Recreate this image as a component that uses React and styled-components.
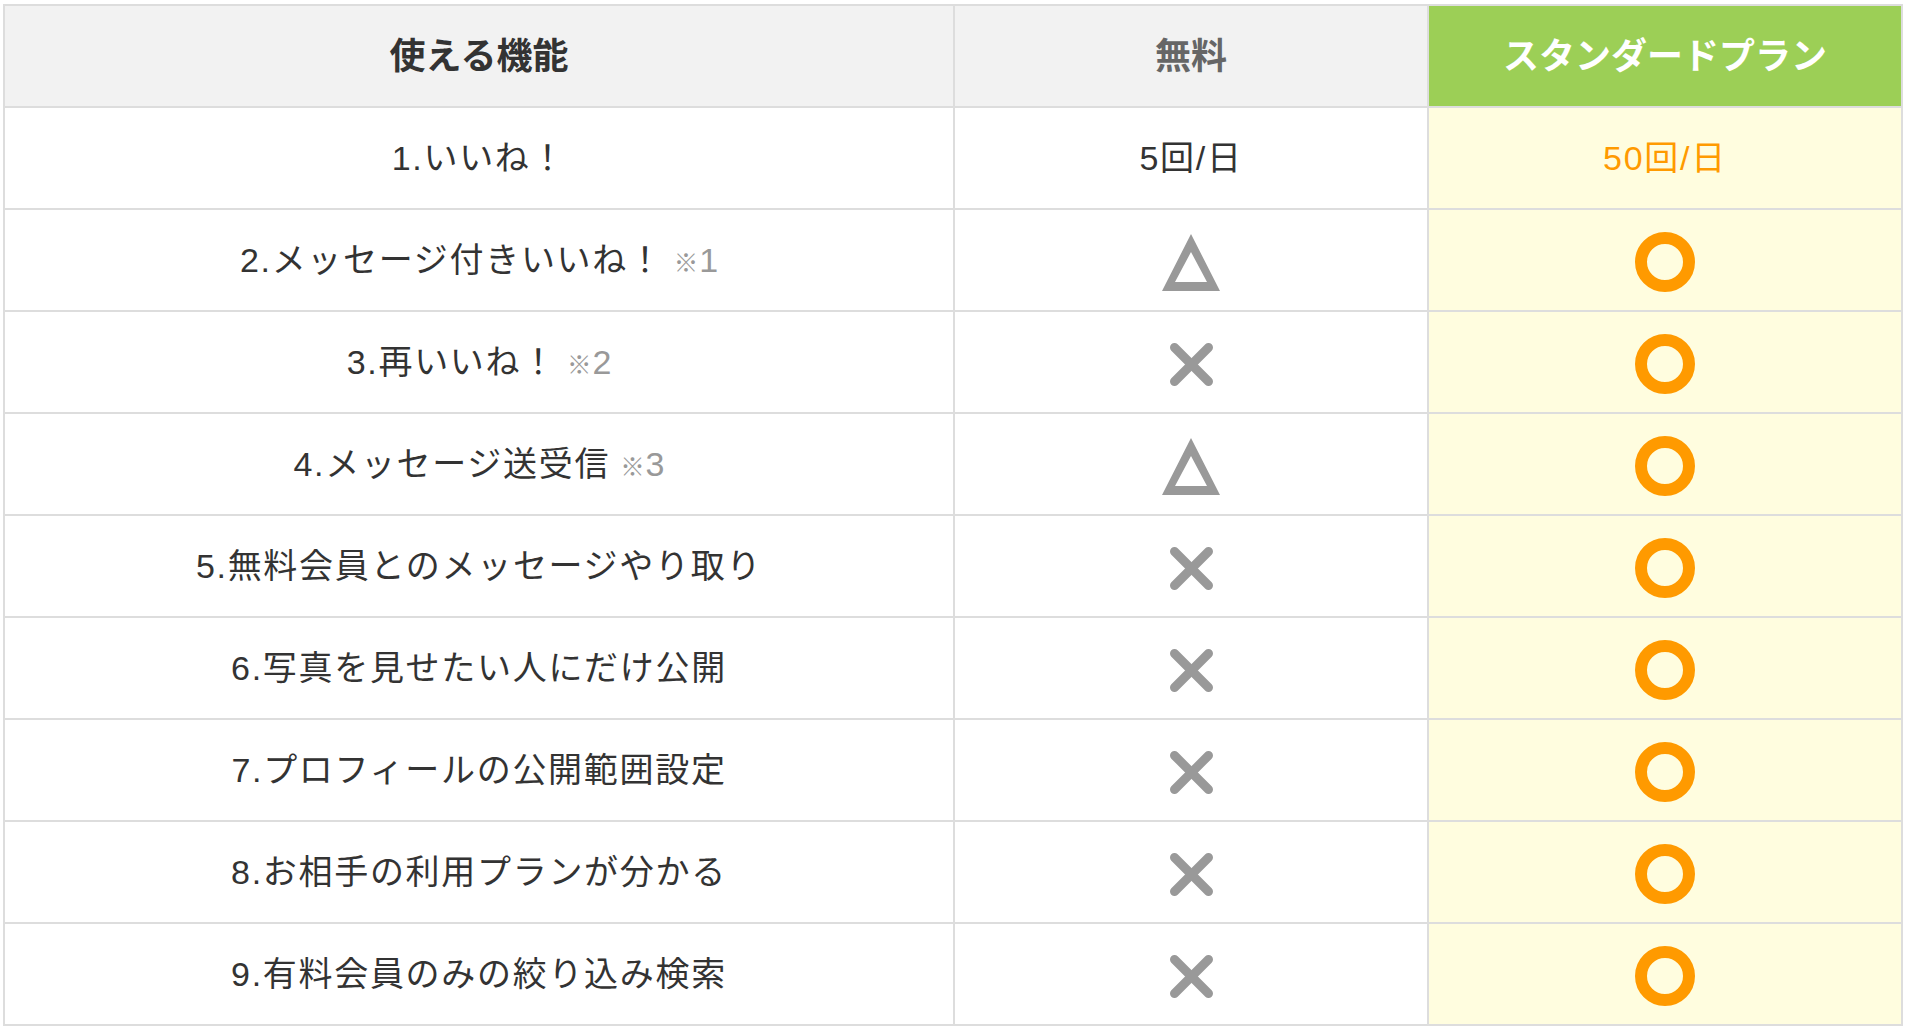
import React from "react";
import styled, { createGlobalStyle, css } from "styled-components";

const GlobalStyle = createGlobalStyle`
  html, body {
    margin: 0;
    padding: 0;
    background: #fff;
  }
  body {
    font-family: "Liberation Sans", "Noto Sans CJK JP", sans-serif;
    color: #333;
  }
`;

const Page = styled.div`
  padding: 4px 4px 0 3px;
`;

const Table = styled.table`
  width: 1900px;
  table-layout: fixed;
  border-collapse: separate;
  border-spacing: 0;
  border-top: 2px solid #ddd;
  border-left: 2px solid #ddd;
`;

const HeadCell = styled.th`
  box-sizing: border-box;
  height: 102px;
  padding: 0 0 6px;
  border-right: 2px solid #ddd;
  border-bottom: 2px solid #ddd;
  font-size: 36px;
  font-weight: bold;
  text-align: center;
  vertical-align: middle;
  background: #f2f2f2;
  color: #333;
  ${(p) =>
    p.muted &&
    css`
      color: #666;
    `}
  ${(p) =>
    p.premium &&
    css`
      background: #9ccf56;
      color: #fff;
    `}
`;

const Cell = styled.td`
  box-sizing: border-box;
  height: 102px;
  padding: 0 0 5px;
  border-right: 2px solid #ddd;
  border-bottom: 2px solid #ddd;
  font-size: 34px;
  letter-spacing: 1.7px;
  text-align: center;
  vertical-align: middle;
  color: #333;
  ${(p) =>
    p.premium &&
    css`
      background: #fffddf;
      color: #ff9a00;
    `}
`;

const Note = styled.span`
  color: #999;
  margin-left: 10px;
  letter-spacing: 0;
`;

const NoteMark = styled.span`
  font-size: 0.72em;
  font-weight: bold;
  margin-right: 1px;
`;

const Mark = styled.svg`
  display: block;
  margin: 9px auto 0;
`;

const Triangle = () => (
  <Mark width="58" height="57" viewBox="0 0 58 57">
    <path
      fill="#999"
      fillRule="evenodd"
      d="M29 0 L58 57 L0 57 Z M29 18 L13 48 L45 48 Z"
    />
  </Mark>
);

const Cross = () => (
  <Mark width="43" height="43" viewBox="0 0 43 43">
    <g stroke="#999" strokeWidth="9" strokeLinecap="round">
      <line x1="4.5" y1="4.5" x2="38.5" y2="38.5" />
      <line x1="38.5" y1="4.5" x2="4.5" y2="38.5" />
    </g>
  </Mark>
);

const Circle = () => (
  <Mark width="60" height="60" viewBox="0 0 60 60">
    <circle cx="30" cy="30" r="24" fill="none" stroke="#ff9a00" strokeWidth="12" />
  </Mark>
);

const rows = [
  { label: "1.いいね！", free: "5回/日", plan: "50回/日" },
  { label: "2.メッセージ付きいいね！", note: "1", free: "tri" },
  { label: "3.再いいね！", note: "2", free: "x" },
  { label: "4.メッセージ送受信", note: "3", free: "tri" },
  { label: "5.無料会員とのメッセージやり取り", free: "x" },
  { label: "6.写真を見せたい人にだけ公開", free: "x" },
  { label: "7.プロフィールの公開範囲設定", free: "x" },
  { label: "8.お相手の利用プランが分かる", free: "x" },
  { label: "9.有料会員のみの絞り込み検索", free: "x" },
];

const renderFree = (v) => {
  if (v === "tri") return <Triangle />;
  if (v === "x") return <Cross />;
  return v;
};

export default function App() {
  return (
    <Page>
      <GlobalStyle />
      <Table>
        <thead>
          <tr>
            <HeadCell style={{ width: 950 }}>使える機能</HeadCell>
            <HeadCell muted style={{ width: 474 }}>
              無料
            </HeadCell>
            <HeadCell premium style={{ width: 474 }}>
              スタンダードプラン
            </HeadCell>
          </tr>
        </thead>
        <tbody>
          {rows.map((r) => (
            <tr key={r.label}>
              <Cell>
                {r.label}
                {r.note && (
                  <Note>
                    <NoteMark>※</NoteMark>
                    {r.note}
                  </Note>
                )}
              </Cell>
              <Cell>{renderFree(r.free)}</Cell>
              <Cell premium>{r.plan ? r.plan : <Circle />}</Cell>
            </tr>
          ))}
        </tbody>
      </Table>
    </Page>
  );
}
